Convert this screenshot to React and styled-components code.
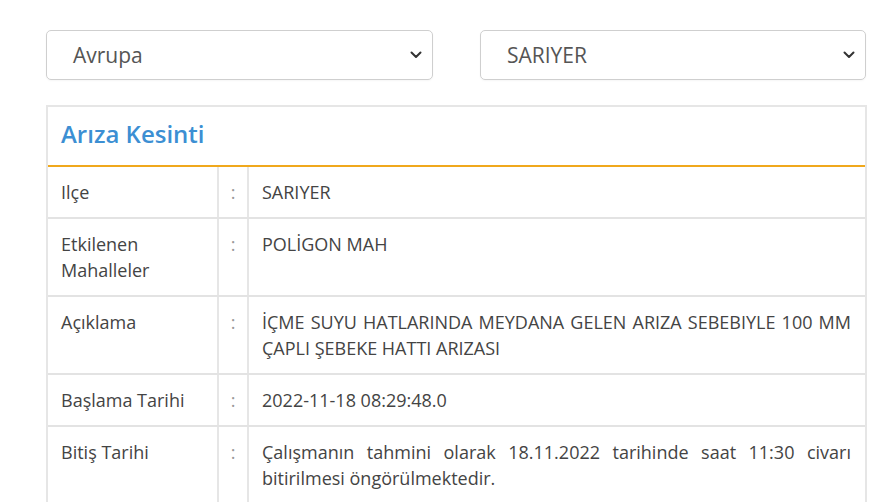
import React from "react";
import styled, { createGlobalStyle } from "styled-components";

const GlobalStyle = createGlobalStyle`
  body {
    margin: 0;
    background: #fff;
    font-family: "Open Sans", "Noto Sans", sans-serif;
    color: #444;
  }
`;

const Page = styled.div`
  width: 821px;
  padding: 30px 0 0 46px;
`;

const Filters = styled.div`
  display: grid;
  grid-template-columns: 387px 386px;
  column-gap: 47px;
  margin-bottom: 25px;
`;

const SelectBox = styled.div`
  height: 50px;
  box-sizing: border-box;
  border: 1px solid #cfcfcf;
  border-radius: 5px;
  display: flex;
  align-items: center;
  justify-content: space-between;
  padding: 0 10px 0 26px;
  font-size: 21px;
  color: #555;
  box-shadow: 0 1px 2px rgba(0, 0, 0, 0.04);
`;

const Chevron = () => (
  <svg width="12" height="8" viewBox="0 0 12 8">
    <path
      d="M1.5 1.5 L6 6 L10.5 1.5"
      fill="none"
      stroke="#333"
      strokeWidth="2"
      strokeLinecap="round"
      strokeLinejoin="round"
    />
  </svg>
);

const Card = styled.div`
  border: 2px solid #e6e6e6;
  border-bottom: none;
`;

const CardHeader = styled.div`
  height: 60px;
  box-sizing: border-box;
  display: flex;
  align-items: center;
  padding: 0 0 5px 13px;
  border-bottom: 2px solid #f0a81c;
  font-size: 24px;
  font-weight: 600;
  color: #3c8fd3;
`;

const Row = styled.div`
  display: grid;
  grid-template-columns: 169px 30px 1fr;
  border-bottom: 2px solid #e3e3e3;
  font-size: 18px;
  line-height: 26px;
`;

const Cell = styled.div`
  padding: 12px 14px 12px 13px;
  border-left: ${(p) => (p.first ? "none" : "2px solid #e6e6e6")};
  text-align: ${(p) => (p.justify ? "justify" : "left")};
`;

const Colon = styled(Cell)`
  padding: 12px 0;
  text-align: center;
  color: #999;
`;

const rows = [
  ["Ilçe", "SARIYER"],
  ["Etkilenen Mahalleler", "POLİGON MAH"],
  ["Açıklama", "İÇME SUYU HATLARINDA MEYDANA GELEN ARIZA SEBEBIYLE 100 MM ÇAPLI ŞEBEKE HATTI ARIZASI"],
  ["Başlama Tarihi", "2022-11-18 08:29:48.0"],
  ["Bitiş Tarihi", "Çalışmanın tahmini olarak 18.11.2022 tarihinde saat 11:30 civarı bitirilmesi öngörülmektedir."],
];

export default function App() {
  return (
    <Page>
      <GlobalStyle />
      <Filters>
        <SelectBox>
          Avrupa
          <Chevron />
        </SelectBox>
        <SelectBox>
          SARIYER
          <Chevron />
        </SelectBox>
      </Filters>
      <Card>
        <CardHeader>Arıza Kesinti</CardHeader>
        {rows.map(([label, value]) => (
          <Row key={label}>
            <Cell first>{label}</Cell>
            <Colon>:</Colon>
            <Cell justify>{value}</Cell>
          </Row>
        ))}
      </Card>
    </Page>
  );
}
